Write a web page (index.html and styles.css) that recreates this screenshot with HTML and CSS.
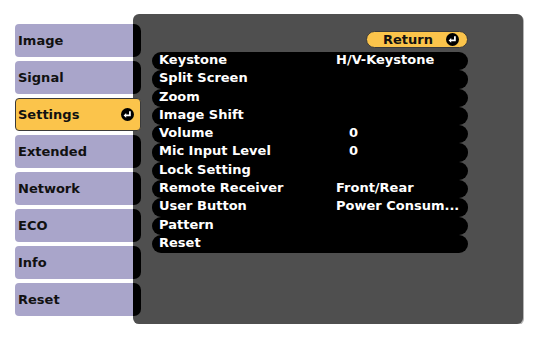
FILE: index.html
```html
<!DOCTYPE html>
<html lang="en">
<head>
<meta charset="UTF-8">
<title>Settings Menu</title>
<link rel="stylesheet" href="styles.css">
</head>
<body>
    <div class="screen">
        <ul class="tabs">
            <li class="tab"><span class="tab-label">Image</span><span class="tab-notch"></span></li>
            <li class="tab"><span class="tab-label">Signal</span><span class="tab-notch"></span></li>
            <li class="tab tab-active">
                <span class="tab-label">Settings</span>
                <svg class="enter-icon" viewBox="0 0 14 14" width="13" height="13">
                    <circle cx="7" cy="7" r="7" fill="#000"/>
                    <path d="M9.6 3.4 V8 H5.2" fill="none" stroke="#fff" stroke-width="1.9"/>
                    <path d="M2.8 8 L5.6 5.4 V10.6 Z" fill="#fff"/>
                </svg>
            </li>
            <li class="tab"><span class="tab-label">Extended</span><span class="tab-notch"></span></li>
            <li class="tab"><span class="tab-label">Network</span><span class="tab-notch"></span></li>
            <li class="tab"><span class="tab-label">ECO</span><span class="tab-notch"></span></li>
            <li class="tab"><span class="tab-label">Info</span><span class="tab-notch"></span></li>
            <li class="tab"><span class="tab-label">Reset</span><span class="tab-notch"></span></li>
        </ul>

        <div class="panel">
            <div class="panel-top">
                <button class="return-btn">
                    Return
                    <svg class="enter-icon" viewBox="0 0 14 14" width="13" height="13">
                        <circle cx="7" cy="7" r="7" fill="#000"/>
                        <path d="M9.6 3.4 V8 H5.2" fill="none" stroke="#fff" stroke-width="1.9"/>
                        <path d="M2.8 8 L5.6 5.4 V10.6 Z" fill="#fff"/>
                    </svg>
                </button>
            </div>
            <ul class="settings-list">
                <li class="row"><span class="row-label">Keystone</span><span class="row-value">H/V-Keystone</span></li>
                <li class="row"><span class="row-label">Split Screen</span><span class="row-value"></span></li>
                <li class="row"><span class="row-label">Zoom</span><span class="row-value"></span></li>
                <li class="row"><span class="row-label">Image Shift</span><span class="row-value"></span></li>
                <li class="row"><span class="row-label">Volume</span><span class="row-value num">0</span></li>
                <li class="row"><span class="row-label">Mic Input Level</span><span class="row-value num">0</span></li>
                <li class="row"><span class="row-label">Lock Setting</span><span class="row-value"></span></li>
                <li class="row"><span class="row-label">Remote Receiver</span><span class="row-value">Front/Rear</span></li>
                <li class="row"><span class="row-label">User Button</span><span class="row-value">Power Consum...</span></li>
                <li class="row"><span class="row-label">Pattern</span><span class="row-value"></span></li>
                <li class="row"><span class="row-label">Reset</span><span class="row-value"></span></li>
            </ul>
        </div>
    </div>
</body>
</html>
```
FILE: styles.css
```css
/* Basic Reset & Body Styling */
body {
    margin: 0;
    background-color: #fff;
    font-family: "DejaVu Sans", sans-serif;
    font-weight: bold;
    font-size: 13px;
}

ul {
    list-style: none;
    margin: 0;
    padding: 0;
}

.screen {
    display: flex;
    align-items: flex-start;
    margin: 14px 0 0 15px;
}

/* Left column of menu tabs */
.tabs {
    display: flex;
    flex-direction: column;
    gap: 4px;
    width: 126px;
    padding-top: 10px;
    margin-right: -8px; /* notches sit on the panel edge */
    position: relative;
    z-index: 1;
}

.tab {
    display: flex;
    height: 33px;
}

.tab-label {
    flex: 1;
    display: flex;
    align-items: center;
    padding-left: 3px;
    background-color: #a9a5ca;
    color: #111;
    border-radius: 4px 0 0 4px;
}

.tab-notch {
    width: 8px;
    background-color: #000;
    border-radius: 0 7px 7px 0;
}

.tab-active {
    align-items: center;
    background-color: #fbc44b;
    border: 1px solid #3a3a3a;
    border-radius: 4px;
    height: 33px;
    box-sizing: border-box;
    padding-right: 6px;
}

.tab-active .tab-label {
    background: none;
    padding-left: 2px;
}

/* Right panel */
.panel {
    width: 390px;
    height: 310px;
    background-color: #4f4f4f;
    border-radius: 6px;
    box-shadow: 1px 1px 0 #b4b4b4;
    padding: 17px 55px 0 19px;
    box-sizing: border-box;
}

.panel-top {
    display: flex;
    justify-content: flex-end;
    margin-bottom: 4px;
}

.return-btn {
    display: flex;
    align-items: center;
    gap: 13px;
    width: 102px;
    height: 17px;
    padding: 0 11px 0 16px;
    box-sizing: border-box;
    background-color: #fbc44b;
    border: 1px solid #3a3a3a;
    border-radius: 9px;
    font: inherit;
    color: #111;
}

.enter-icon {
    display: block;
    flex: none;
}

.settings-list {
    display: flex;
    flex-direction: column;
}

.row {
    display: grid;
    grid-template-columns: 177px 1fr;
    height: 18.3px;
    padding: 1px 0 0 7px;
    box-sizing: border-box;
    line-height: 13px;
    background-color: #000;
    border-radius: 9px;
    color: #fff;
    white-space: nowrap;
}

.row-value.num {
    padding-left: 13px;
}
```
